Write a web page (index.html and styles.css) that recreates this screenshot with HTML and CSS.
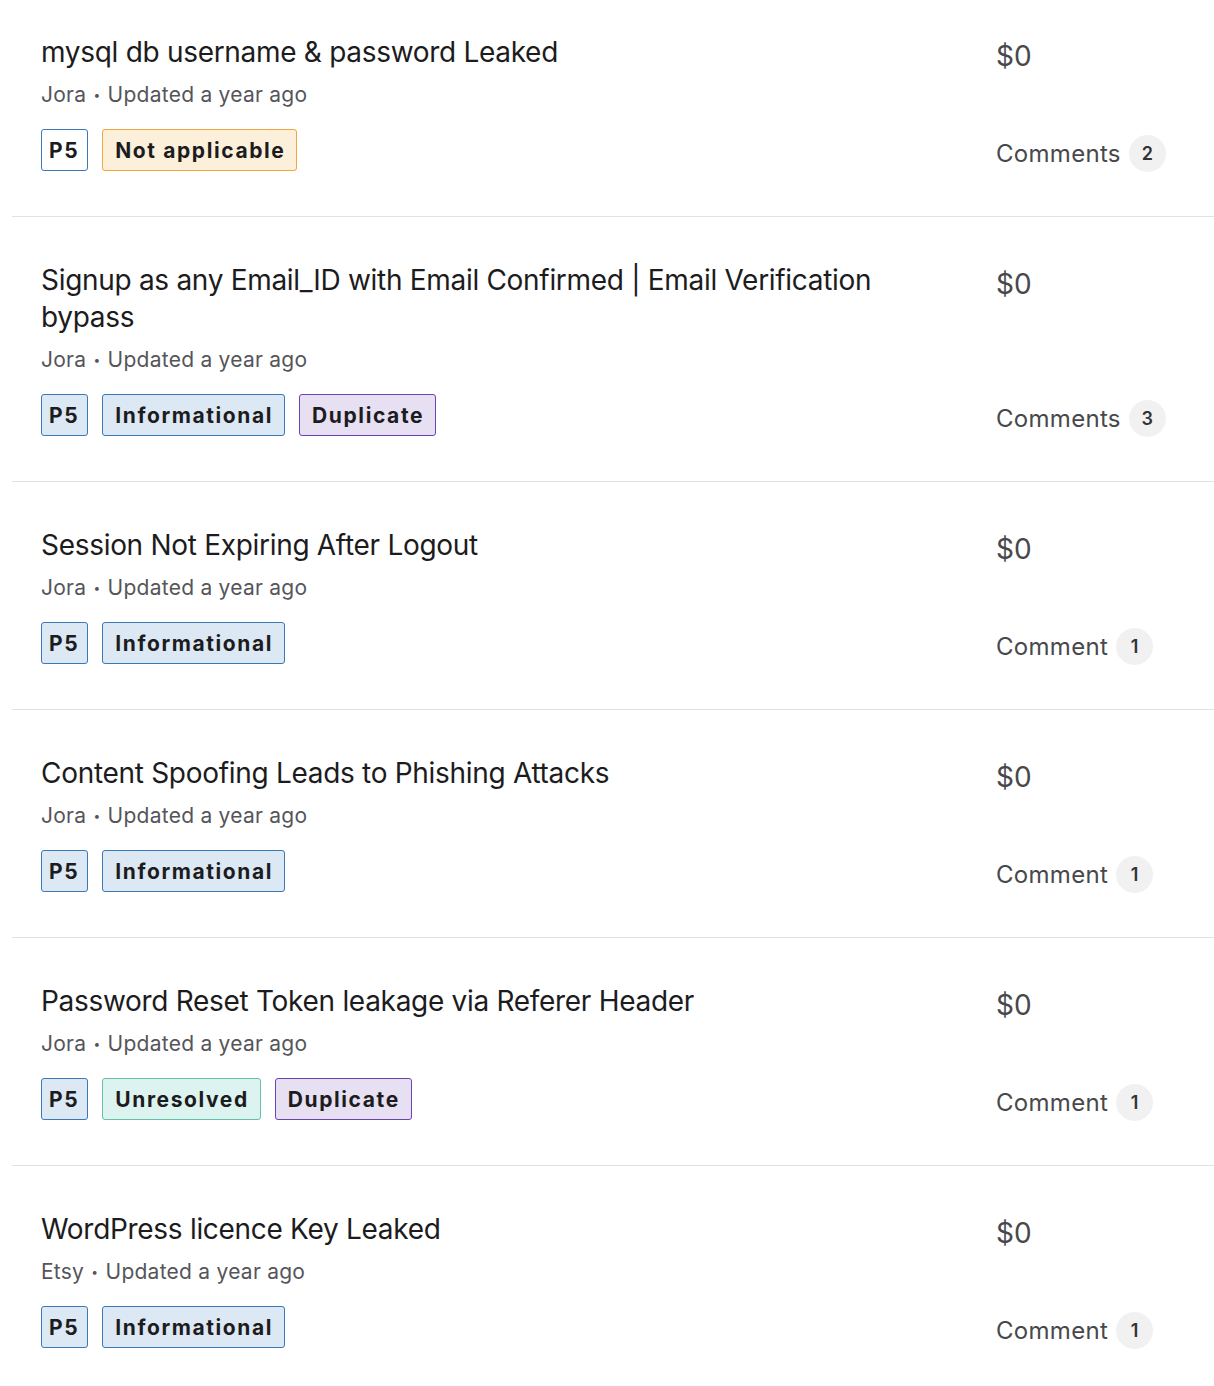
FILE: index.html
```html
<!DOCTYPE html>
<html>
<head>
<meta charset="utf-8">
<link rel="stylesheet" href="styles.css">
</head>
<body>
<div class="list">
  <div class="row first">
    <div class="main">
      <div class="title">mysql db username &amp; password Leaked</div>
      <div class="meta">Jora <span class="dot">•</span> Updated a year ago</div>
      <div class="badges">
        <span class="badge prio prio-outline">P5</span>
        <span class="badge na">Not applicable</span>
      </div>
    </div>
    <div class="side">
      <div class="bounty">$0</div>
      <div class="comments">Comments <span class="count">2</span></div>
    </div>
  </div>
  <div class="row">
    <div class="main">
      <div class="title">Signup as any Email_ID with Email Confirmed | Email Verification bypass</div>
      <div class="meta">Jora <span class="dot">•</span> Updated a year ago</div>
      <div class="badges">
        <span class="badge prio">P5</span>
        <span class="badge info">Informational</span>
        <span class="badge dup">Duplicate</span>
      </div>
    </div>
    <div class="side">
      <div class="bounty">$0</div>
      <div class="comments">Comments <span class="count">3</span></div>
    </div>
  </div>
  <div class="row">
    <div class="main">
      <div class="title">Session Not Expiring After Logout</div>
      <div class="meta">Jora <span class="dot">•</span> Updated a year ago</div>
      <div class="badges">
        <span class="badge prio">P5</span>
        <span class="badge info">Informational</span>
      </div>
    </div>
    <div class="side">
      <div class="bounty">$0</div>
      <div class="comments">Comment <span class="count">1</span></div>
    </div>
  </div>
  <div class="row">
    <div class="main">
      <div class="title">Content Spoofing Leads to Phishing Attacks</div>
      <div class="meta">Jora <span class="dot">•</span> Updated a year ago</div>
      <div class="badges">
        <span class="badge prio">P5</span>
        <span class="badge info">Informational</span>
      </div>
    </div>
    <div class="side">
      <div class="bounty">$0</div>
      <div class="comments">Comment <span class="count">1</span></div>
    </div>
  </div>
  <div class="row">
    <div class="main">
      <div class="title">Password Reset Token leakage via Referer Header</div>
      <div class="meta">Jora <span class="dot">•</span> Updated a year ago</div>
      <div class="badges">
        <span class="badge prio">P5</span>
        <span class="badge unres">Unresolved</span>
        <span class="badge dup">Duplicate</span>
      </div>
    </div>
    <div class="side">
      <div class="bounty">$0</div>
      <div class="comments">Comment <span class="count">1</span></div>
    </div>
  </div>
  <div class="row">
    <div class="main">
      <div class="title">WordPress licence Key Leaked</div>
      <div class="meta">Etsy <span class="dot">•</span> Updated a year ago</div>
      <div class="badges">
        <span class="badge prio">P5</span>
        <span class="badge info">Informational</span>
      </div>
    </div>
    <div class="side">
      <div class="bounty">$0</div>
      <div class="comments">Comment <span class="count">1</span></div>
    </div>
  </div>
</div>
</body>
</html>
```

FILE: styles.css
```css
html, body {
  margin: 0;
  padding: 0;
  background: #ffffff;
}
body {
  font-family: Inter, "Noto Sans", "Liberation Sans", sans-serif;
  color: #1d1d1f;
  overflow: hidden;
}
.list {
  padding-left: 12px;
}
.row {
  display: flex;
  padding: 45px 0 45px 29px;
  border-bottom: 1px solid #e2e2e2;
}
.row.first {
  padding-top: 34px;
}
.main {
  width: 880px;
  flex: none;
}
.title {
  font-size: 28px;
  line-height: 37px;
  color: #1c1c1e;
  letter-spacing: -0.3px;
}
.meta {
  margin-top: 10px;
  font-size: 21px;
  line-height: 28px;
  letter-spacing: 0.25px;
  color: #55555a;
}
.dot {
  font-size: 12px;
  vertical-align: 3px;
  margin: 0 1px;
}
.badges {
  display: flex;
  gap: 14px;
  margin-top: 20px;
}
.badge {
  box-sizing: border-box;
  height: 42px;
  display: inline-flex;
  align-items: center;
  padding: 0 11px 0 12px;
  border: 1px solid;
  border-radius: 3px;
  font-size: 21px;
  font-weight: 700;
  letter-spacing: 1.6px;
  color: #1c1c1e;
}
.prio {
  padding: 0 8px 0 7px;
  background: #dce8f3;
  border-color: #3a78b8;
}
.prio-outline {
  background: #ffffff;
}
.info {
  background: #dce8f3;
  border-color: #3a78b8;
}
.na {
  background: #fdf0da;
  border-color: #f3a43a;
}
.dup {
  background: #e7dff2;
  border-color: #6d42b3;
}
.unres {
  background: #ddf3ef;
  border-color: #63c1aa;
}
.side {
  margin-left: 75px;
  display: flex;
  flex-direction: column;
  justify-content: space-between;
}
.bounty {
  font-size: 28px;
  line-height: 37px;
  padding-top: 4px;
  color: #48484c;
}
.comments {
  display: flex;
  align-items: center;
  font-size: 24px;
  letter-spacing: 0.3px;
  color: #48484c;
  margin-bottom: -1px;
}
.count {
  width: 37px;
  height: 37px;
  border-radius: 50%;
  background: #f1f1f2;
  display: inline-flex;
  align-items: center;
  justify-content: center;
  margin-left: 8px;
  font-size: 18px;
  font-weight: 600;
  letter-spacing: 0;
  color: #333336;
}
```
